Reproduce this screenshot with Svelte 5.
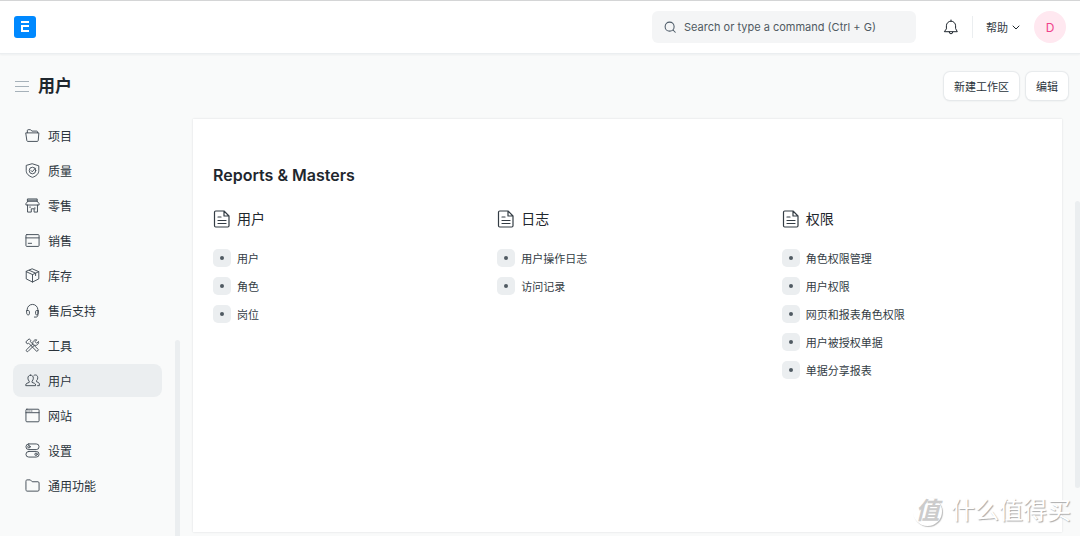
<script lang="ts">
  interface NavItem {
    id: string;
    label: string;
  }

  interface LinkCard {
    title: string;
    links: string[];
  }

  const navItems: NavItem[] = [
    { id: "projects", label: "项目" },
    { id: "quality", label: "质量" },
    { id: "retail", label: "零售" },
    { id: "selling", label: "销售" },
    { id: "stock", label: "库存" },
    { id: "support", label: "售后支持" },
    { id: "tools", label: "工具" },
    { id: "users", label: "用户" },
    { id: "website", label: "网站" },
    { id: "settings", label: "设置" },
    { id: "general", label: "通用功能" },
  ];

  const cards: LinkCard[] = [
    { title: "用户", links: ["用户", "角色", "岗位"] },
    { title: "日志", links: ["用户操作日志", "访问记录"] },
    {
      title: "权限",
      links: ["角色权限管理", "用户权限", "网页和报表角色权限", "用户被授权单据", "单据分享报表"],
    },
  ];

  let active = $state("users");
  let sidebarOpen = $state(true);
  let query = $state("");

  const pageTitle = $derived(navItems.find((item) => item.id === active)?.label ?? "");
</script>

{#snippet navIcon(id: string)}
  <svg class="icon" viewBox="0 0 16 16" aria-hidden="true">
    {#if id === "projects"}
      <path d="M2.5 5V2.6c0-.4.3-.8.8-.8h2.600l1.400 1.500h5.200c.5 0 .8.3.8.8V5" />
      <path d="M1.200 5.200h13.600l-.7 8.100c0 .6-.4 1-1 1H2.900c-.6 0-1-.4-1-1z" />
    {:else if id === "quality"}
      <path d="M8 .9 14.700 3v5c0 3.700-2.900 6-6.700 7.300C4.200 14 1.300 11.700 1.300 8V3z" />
      <circle cx="8" cy="8" r="3.500" />
      <path d="m6.400 8 1.300 1.400 3.400-3.900" />
    {:else if id === "retail"}
      <path d="M3 1h10v2.500H3zM3 3.500 1 6v1.500h14V6l-2-2.500M2.700 7.500V15h4v-3.500h3V15h3.600V7.500M3.500 2.300h9M5 9.700h.8M10.500 10.300v1.400" />
    {:else if id === "selling"}
      <rect x="1" y="1.700" width="14" height="12.600" rx="1" />
      <path d="M1 5.200h14M3.500 11h3.500" />
    {:else if id === "stock"}
      <path d="m8 1 6.700 2.900v7.700L8 15l-6.700-3.400V3.900zM1.300 3.900 8 7l6.700-3.100M8 7v8M4.600 2.500l6.700 3v2.600" />
    {:else if id === "support"}
      <path d="M2.300 8V7.200a5.700 5.700 0 0 1 11.400 0V13c0 1.200-.8 2-2 2H10" />
      <path d="M2 8h1.500c.8 0 1.200.5 1.200 1.200v2.300c0 .8-.5 1.200-1.200 1.200-1 0-1.700-.7-1.700-1.700zM14 8h-1.500c-.8 0-1.200.5-1.200 1.200v2.300c0 .8.5 1.200 1.200 1.200 1 0 1.700-.7 1.700-1.700z" />
    {:else if id === "tools"}
      <path d="m6.700 7.500-5 5c-.5.500-.5 1.200 0 1.700s1.200.5 1.700 0l5-5M8.400 9.200l1.500-1.500c1.300.4 2.700.2 3.600-.8.900-.8 1.200-2 .9-3.200l-2 1.900-1.700-1.700L12.500 2c-1.200-.3-2.400 0-3.200.9-.9.900-1.200 2.200-.8 3.400L6.900 7.800" />
      <path d="m1.200 3.800 3.200-2.900 2 1.900-.9.900 8.900 8.800-1.800 1.900-8.800-9-1 .7z" />
    {:else if id === "users"}
      <path d="M6 2.300c1.800 0 2.900 1.300 2.900 3.200 0 1.500-.6 2.600-1.400 3.200v1.300l2.600 1c.8.300 1.200 1 1.200 1.800v.7H.8v-.7c0-.8.4-1.500 1.200-1.800l2.500-1V8.700C3.700 8.100 3.100 7 3.100 5.500c0-1.900 1.100-3.200 2.900-3.200z" />
      <path d="M9.600 2.500c.4-.3.900-.4 1.400-.4 1.700 0 2.600 1.200 2.600 3 0 1.400-.5 2.400-1.300 3v1.200l2 .8c.6.300 1 .9 1 1.600v1.800h-1.900" />
    {:else if id === "website"}
      <rect x="1" y="1.300" width="14" height="13.400" rx="1" />
      <path d="M1 5h14M3 3.200h.4M5 3.200h.4M7 3.200h.4" />
    {:else if id === "settings"}
      <rect x="1" y="1" width="14" height="6" rx="3" />
      <circle cx="4.200" cy="4" r="1.300" />
      <rect x="1" y="9" width="14" height="6" rx="3" />
      <circle cx="11.800" cy="12" r="1.300" />
    {:else}
      <path d="M1 3.200c0-.7.500-1.200 1.200-1.200h3.500l2 2h6.100c.7 0 1.200.5 1.200 1.200v7.600c0 .7-.5 1.200-1.200 1.200H2.200c-.7 0-1.200-.5-1.200-1.200z" />
    {/if}
  </svg>
{/snippet}

<div class="desk">
  <header class="navbar">
    <a class="navbar__brand" href="#home" aria-label="Home">
      <svg viewBox="0 0 22 22" aria-hidden="true">
        <rect width="22" height="22" rx="3" fill="#0089ff" />
        <path d="M7 5h8v2H7zM7 9h8v2H9v3h6v2H7z" fill="#fff" />
      </svg>
    </a>

    <div class="navbar__tools">
      <label class="search">
        <svg class="search__icon" viewBox="0 0 16 16" aria-hidden="true">
          <circle cx="7.500" cy="7.500" r="6" />
          <path d="m12 12 3 3" />
        </svg>
        <input
          type="text"
          bind:value={query}
          placeholder="Search or type a command (Ctrl + G)"
          aria-label="Search"
        />
      </label>

      <button class="bell" type="button" aria-label="Notifications">
        <svg viewBox="0 0 16 16" aria-hidden="true">
          <path d="M8 1v1M3.400 9.500V6.800a4.600 4.600 0 0 1 9.200 0v2.700l1.700 3.200H1.700zM6.200 13a1.800 1.800 0 0 0 3.600 0" />
        </svg>
      </button>

      <button class="help" type="button">
        帮助
        <svg viewBox="0 0 8 8" aria-hidden="true"><path d="m1 3 3 3 3-3" /></svg>
      </button>

      <button class="avatar" type="button" aria-label="Account">D</button>
    </div>
  </header>

  <div class="page-head">
    <button
      class="menu-toggle"
      type="button"
      aria-label="Toggle sidebar"
      aria-expanded={sidebarOpen}
      onclick={() => (sidebarOpen = !sidebarOpen)}
    >
      <svg viewBox="0 0 14 12" aria-hidden="true"><path d="M0 1.500h14M0 6.500h14M0 11.500h14" /></svg>
    </button>
    <h1>{pageTitle}</h1>
    <div class="page-head__actions">
      <button type="button">新建工作区</button>
      <button type="button">编辑</button>
    </div>
  </div>

  <div class="body">
    {#if sidebarOpen}
      <nav class="sidebar" aria-label="Workspaces">
        {#each navItems as item (item.id)}
          <a
            class="sidebar__item"
            class:active={item.id === active}
            href={`#${item.id}`}
            onclick={() => (active = item.id)}
          >
            {@render navIcon(item.id)}
            <span>{item.label}</span>
          </a>
        {/each}
        <span class="sidebar__thumb"></span>
      </nav>
    {/if}

    <main class="workspace">
      <h2>Reports &amp; Masters</h2>
      <div class="cards">
        {#each cards as card (card.title)}
          <section>
            <h3>
              <svg viewBox="0 0 18 18" aria-hidden="true">
                <path d="M11 1H2.700C2 1 1.500 1.500 1.500 2.200v13.600c0 .7.500 1.200 1.200 1.200h12.100c.7 0 1.200-.5 1.200-1.200V6zV6H16" />
                <path d="M5 7h3M5 10.500h8M5 13.500h8" />
              </svg>
              {card.title}
            </h3>
            <ul>
              {#each card.links as link (link)}
                <li><span class="dot"></span><a href="#link">{link}</a></li>
              {/each}
            </ul>
          </section>
        {/each}
      </div>
    </main>
  </div>

  <span class="page-thumb"></span>
  <div class="watermark">
    <span class="watermark__seal">值</span>
    <span>什么值得买</span>
  </div>
</div>

<style>
  :global(body) {
    background: #f9fafa;
    color: #1f272e;
    font-family: Inter, "Noto Sans CJK SC", sans-serif;
    font-size: 11px;
  }

  button,
  input {
    border: 0;
    padding: 0;
    background: transparent;
    color: inherit;
    font: inherit;
  }

  button {
    cursor: pointer;
  }

  a {
    color: inherit;
    text-decoration: none;
  }

  svg {
    display: block;
    flex: none;
    fill: none;
    stroke-linecap: round;
    stroke-linejoin: round;
  }

  .desk {
    position: relative;
    display: flex;
    flex-direction: column;
    box-sizing: border-box;
    min-height: 100vh;
    overflow: hidden;
    padding-bottom: 4px;
  }

  .navbar {
    display: flex;
    align-items: center;
    justify-content: space-between;
    height: 52px;
    border-top: 1px solid #d4d5d6;
    border-bottom: 1px solid #ebeef0;
    box-shadow: 0 1px 2px rgb(25 39 52 / 5%);
    background: #fff;
    padding: 0 14px;
  }

  .navbar__brand svg {
    width: 22px;
    height: 22px;
  }

  .navbar__tools {
    display: flex;
    align-items: center;
  }

  .search {
    display: flex;
    align-items: center;
    gap: 8px;
    box-sizing: border-box;
    width: 264px;
    height: 32px;
    border-radius: 6px;
    background: #f4f5f6;
    padding: 0 12px;
  }

  .search__icon {
    width: 12px;
    height: 12px;
    stroke: #4c5a67;
    stroke-width: 1.4;
  }

  .search input {
    flex: 1;
    min-width: 0;
    outline: 0;
    font-size: 11px;
  }

  .search input::placeholder {
    color: #505a62;
    opacity: 1;
  }

  .bell {
    border-right: 1px solid #ebeef0;
    margin-left: 27px;
    padding: 3px 13px 3px 0;
  }

  .bell svg {
    width: 16px;
    height: 16px;
    stroke: #1f272e;
  }

  .help {
    display: flex;
    align-items: center;
    gap: 4px;
    margin: 0 14px 0 13px;
    color: #333c44;
  }

  .help svg {
    width: 8px;
    height: 8px;
    stroke: #1f272e;
  }

  .avatar {
    width: 32px;
    height: 32px;
    border-radius: 50%;
    background: #ffe8f0;
    color: #f0418a;
    font-size: 12px;
  }

  .page-head {
    display: flex;
    align-items: center;
    height: 64px;
    padding: 0 12px 0 15px;
  }

  .menu-toggle svg {
    width: 14px;
    height: 12px;
    stroke: #a6b1b9;
  }

  h1 {
    margin: 0 0 0 9px;
    font-size: 17px;
    line-height: 24px;
    font-weight: 700;
  }

  .page-head__actions {
    display: flex;
    gap: 7px;
    margin-left: auto;
  }

  .page-head__actions button {
    height: 28px;
    border-radius: 6px;
    box-shadow: 0 0 1px 1px #e6e9eb, 0 1px 2px rgb(25 39 52 / 10%);
    background: #fff;
    padding: 0 10px;
    color: #2a333b;
  }

  .body {
    display: flex;
    flex: 1;
    gap: 13px;
    padding-right: 18px;
  }

  .sidebar {
    position: relative;
    display: flex;
    flex-direction: column;
    gap: 2px;
    box-sizing: border-box;
    width: 180px;
    padding: 1px 18px 0 13px;
  }

  .sidebar__item {
    display: flex;
    align-items: center;
    gap: 8px;
    height: 33px;
    border-radius: 8px;
    padding: 0 12px;
    color: #2a333b;
    font-size: 12px;
  }

  .sidebar__item.active {
    background: #ebeef0;
  }

  .icon {
    width: 15px;
    height: 15px;
    stroke: #414b54;
  }

  .sidebar__thumb,
  .page-thumb {
    position: absolute;
    right: 0;
    width: 5px;
    border-radius: 3px;
    background: #ebeef0;
  }

  .sidebar__thumb {
    top: 222px;
    bottom: -10px;
  }

  .page-thumb {
    top: 201px;
    bottom: 48px;
  }

  .workspace {
    flex: 1;
    box-shadow: 0 0 2px rgb(25 39 52 / 14%);
    background: #fff;
    margin-top: 1px;
    padding: 44px 20px;
  }

  h2 {
    margin: 0;
    font-size: 16px;
    line-height: 24px;
    font-weight: 600;
  }

  .cards {
    display: grid;
    grid-template-columns: repeat(3, 1fr);
    gap: 24px;
    margin-top: 20px;
  }

  h3 {
    display: flex;
    align-items: center;
    gap: 6px;
    margin: 0 0 13px;
    font-size: 14px;
    line-height: 24px;
    font-weight: 400;
  }

  h3 svg {
    width: 18px;
    height: 18px;
    stroke: #333c44;
    stroke-width: 1.2;
  }

  ul {
    margin: 0;
    padding: 0;
    list-style: none;
  }

  li {
    display: flex;
    align-items: center;
    gap: 6px;
    height: 28px;
    color: #333c44;
  }

  .dot {
    display: grid;
    place-items: center;
    width: 18px;
    height: 18px;
    border-radius: 5px;
    background: #ebeef0;
  }

  .dot::after {
    width: 4px;
    height: 4px;
    border-radius: 50%;
    background: #505a62;
    content: "";
  }

  .watermark {
    position: absolute;
    right: 9px;
    bottom: 8px;
    display: flex;
    align-items: center;
    gap: 9px;
    color: #fff;
    font-size: 24px;
    line-height: 34px;
    text-shadow: 1px 1px 1px #aaa;
    pointer-events: none;
  }

  .watermark__seal {
    width: 29px;
    height: 29px;
    border-radius: 50%;
    box-shadow: 1px 1px 1px #bbb;
    color: #ccc;
    font-style: italic;
    font-weight: 700;
    line-height: 27px;
    text-align: center;
    text-shadow: none;
  }
</style>
